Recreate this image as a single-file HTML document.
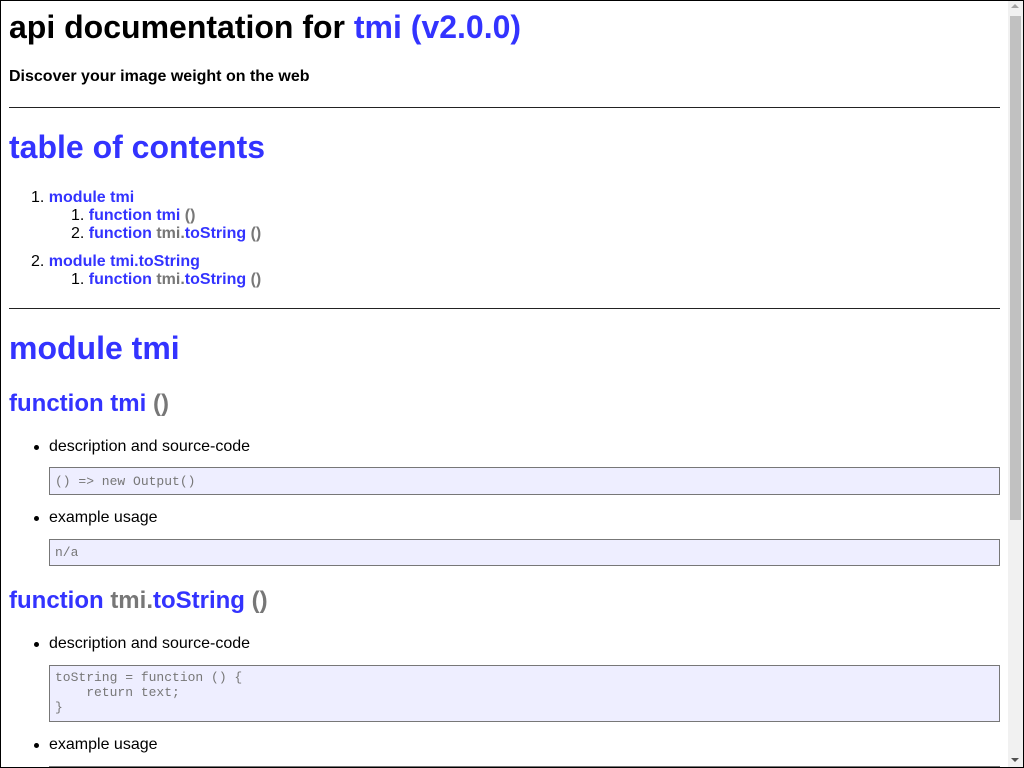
<!DOCTYPE html>
<html><head><meta charset="utf-8"><style>
*{margin:0;padding:0;box-sizing:border-box}
html,body{width:1024px;height:768px;overflow:hidden;background:#fff}
body{font-family:"Liberation Sans",sans-serif;color:#000;position:relative}
.frame{position:absolute;left:0;top:0;width:1024px;height:768px;border:1px solid #000;pointer-events:none}
.a{position:absolute;white-space:pre;line-height:1}
.b{color:#33f}.g{color:#777}
.h1{font-size:32px;font-weight:bold}
.h2{font-size:24px;font-weight:bold}
.t{font-size:16px}
.bold{font-weight:bold}
hr{position:absolute;left:9px;width:991px;height:0;border:0;border-top:1px solid #222}
.code{position:absolute;left:49px;width:951px;background:#eef;border:1px solid #777;font-family:"Liberation Mono",monospace;font-size:13px;color:#777;padding:5px 5px;line-height:15px;white-space:pre}
.dot{position:absolute;width:5px;height:5px;border-radius:50%;background:#000;left:34px}
.sb{position:absolute;left:1008px;top:1px;width:15px;height:766px;background:#f1f1f1}
.th{position:absolute;left:1010px;top:16px;width:11px;height:504px;background:#c1c1c1}
</style></head><body>
<div class="a h1" style="left:9px;top:11px">api documentation for <span class="b">tmi (v2.0.0)</span></div>
<div class="a t bold" style="left:9px;top:69px">Discover your image weight on the web</div>
<hr style="top:107px">
<div class="a h1 b" style="left:9px;top:131px">table of contents</div>
<div class="a t bold" style="left:31px;top:190px"><span style="font-weight:normal">1. </span><span class="b">module tmi</span></div>
<div class="a t bold" style="left:71px;top:208px"><span style="font-weight:normal">1. </span><span class="b">function tmi</span> <span class="g">()</span></div>
<div class="a t bold" style="left:71px;top:226px"><span style="font-weight:normal">2. </span><span class="b">function</span> <span class="g">tmi.</span><span class="b">toString</span> <span class="g">()</span></div>
<div class="a t bold" style="left:31px;top:254px"><span style="font-weight:normal">2. </span><span class="b">module tmi.toString</span></div>
<div class="a t bold" style="left:71px;top:272px"><span style="font-weight:normal">1. </span><span class="b">function</span> <span class="g">tmi.</span><span class="b">toString</span> <span class="g">()</span></div>
<hr style="top:308px">
<div class="a h1 b" style="left:9px;top:332px">module tmi</div>
<div class="a h2" style="left:9px;top:392px"><span class="b">function tmi</span> <span class="g">()</span></div>
<div class="dot" style="top:445px"></div>
<div class="a t" style="left:49px;top:439px">description and source-code</div>
<div class="code" style="top:467px;height:28px;padding-top:6px">() =&gt; new Output()</div>
<div class="dot" style="top:516px"></div>
<div class="a t" style="left:49px;top:510px">example usage</div>
<div class="code" style="top:539px;height:27px">n/a</div>
<div class="a h2" style="left:9px;top:589px"><span class="b">function</span> <span class="g">tmi.</span><span class="b">toString</span> <span class="g">()</span></div>
<div class="dot" style="top:642px"></div>
<div class="a t" style="left:49px;top:636px">description and source-code</div>
<div class="code" style="top:665px;height:57px;padding-top:4px">toString = function () {
    return text;
}</div>
<div class="dot" style="top:743px"></div>
<div class="a t" style="left:49px;top:737px">example usage</div>
<div class="code" style="top:766px;height:28px"></div>
<div class="sb"></div><div class="th"></div>
<div class="a" style="left:1011px;top:4px;width:0;height:0;border-left:4px solid transparent;border-right:4px solid transparent;border-bottom:4px solid #a3a3a3"></div>
<div class="a" style="left:1011px;top:758px;width:0;height:0;border-left:4px solid transparent;border-right:4px solid transparent;border-top:4px solid #505050"></div>
<div class="frame"></div>
</body></html>
